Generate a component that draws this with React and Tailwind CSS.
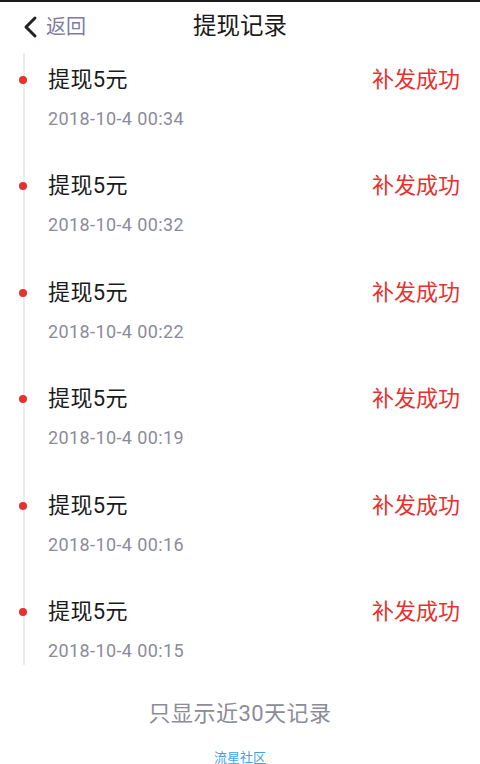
import React from "react";

const records = [
  { id: 1, title: "提现5元", status: "补发成功", time: "2018-10-4 00:34" },
  { id: 2, title: "提现5元", status: "补发成功", time: "2018-10-4 00:32" },
  { id: 3, title: "提现5元", status: "补发成功", time: "2018-10-4 00:22" },
  { id: 4, title: "提现5元", status: "补发成功", time: "2018-10-4 00:19" },
  { id: 5, title: "提现5元", status: "补发成功", time: "2018-10-4 00:16" },
  { id: 6, title: "提现5元", status: "补发成功", time: "2018-10-4 00:15" },
];

const App = () => {
  return (
    <div
      className="w-[480px] h-[764px] overflow-hidden bg-white"
      style={{ fontFamily: "Roboto, 'Noto Sans CJK SC', sans-serif" }}
    >
      {/* status strip */}
      <div className="h-[2px] bg-[#1a1a1a]" />

      {/* Header */}
      <div className="relative h-[50px] flex items-center justify-center">
        <button className="absolute left-[22px] top-0 h-full flex items-center gap-[6px]">
          <svg width="18" height="24" viewBox="0 0 18 24" fill="none">
            <path d="M13 3 L4 12 L13 21" stroke="#222" strokeWidth="3" strokeLinecap="round" strokeLinejoin="round" />
          </svg>
          <span className="text-[20px] leading-none text-[#7f7ca0]">返回</span>
        </button>
        <h1 className="text-[23.5px] leading-none text-[#1a1a1a]">提现记录</h1>
      </div>

      {/* Timeline */}
      <div className="ml-[23px] mt-[1px] border-l-[2px] border-[#ececec] flex flex-col gap-[26.4px]">
        {records.map((item) => (
          <div key={item.id} className="relative h-[80px] pl-[23px] pr-[20px] pt-[14px]">
            <span className="absolute left-[-6px] top-[23px] w-[8px] h-[8px] rounded-full bg-[#e8302c]" />
            <div className="flex items-center justify-between h-[26px]">
              <span className="text-[22px] leading-none tracking-[0.4px] text-[#1a1a1a]">{item.title}</span>
              <span className="text-[22px] leading-none text-[#e8302c]">{item.status}</span>
            </div>
            <div className="mt-[15px] h-[22px] flex items-center text-[18px] leading-none tracking-[0.4px] text-[#8c8b99]">
              {item.time}
            </div>
          </div>
        ))}
      </div>

      {/* Footer */}
      <div className="mt-[34px] h-[30px] flex items-center justify-center text-[22px] tracking-[0.5px] text-[#8c8b99]">
        只显示近30天记录
      </div>
      <div className="mt-[22px] flex justify-center text-[13px] leading-none text-[#3fa2ea]">
        流星社区
      </div>
    </div>
  );
};

export default App;
